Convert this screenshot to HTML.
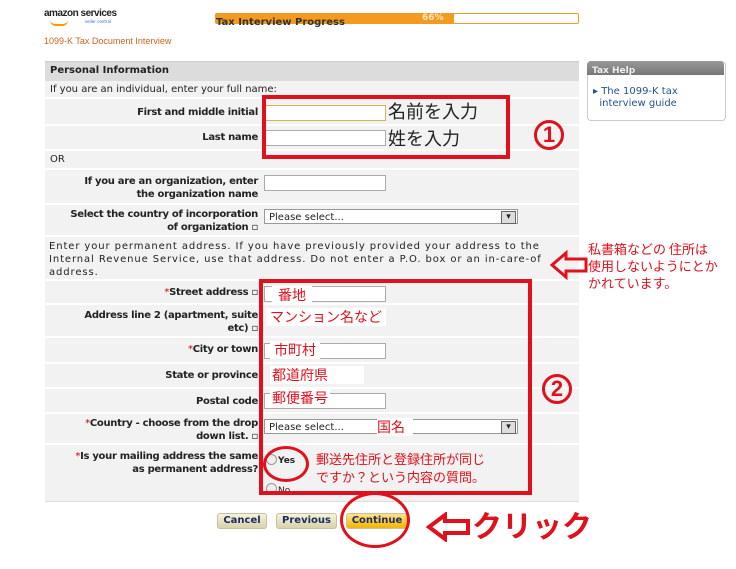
<!DOCTYPE html>
<html><head><meta charset="utf-8"><style>
body{margin:0;width:736px;height:569px;background:#fff;position:relative;overflow:hidden;font-family:"DejaVu Sans","Liberation Sans",sans-serif;font-size:10px;color:#222}
.a{position:absolute}
.row{position:absolute;left:45px;width:534px;background:#f2f2f2;border-bottom:2px solid #fff}
.lbl{position:absolute;right:321px;text-align:right;font-weight:bold;font-size:10px;line-height:13px;width:215px;white-space:nowrap;letter-spacing:-0.3px}
.inp{position:absolute;left:264px;width:120px;height:14px;border:1px solid #aaa;background:#fff}
.jp{font-family:"Noto Sans CJK JP",sans-serif;color:#e0101c}
.star{color:#c00;font-weight:normal}
.sel{position:absolute;left:264px;width:254px;height:15px;border:1px solid #999;background:#fff;font-size:10px;line-height:15px;padding-left:4px;box-sizing:border-box}
.sel:after{content:"▾";position:absolute;right:1px;top:1px;width:13px;height:11px;border:1px solid #666;background:#ddd;line-height:11px;text-align:center;font-size:9px}
.btn{position:absolute;top:513px;height:14px;border-radius:3px;background:linear-gradient(#f6f3d8,#d8d2a8);font-weight:bold;font-size:10px;color:#1a2b66;line-height:14px;text-align:center;border:1px solid #c8c0a0}
.circ{position:absolute;width:30px;height:30px;border:3px solid #e0101c;border-radius:50%;box-sizing:border-box;color:#e0101c;font-size:22px;font-weight:bold;text-align:center;line-height:24px;font-family:"Liberation Sans",sans-serif}
</style></head><body>
<div class="a" style="left:44px;top:8px;font-size:10px;font-weight:bold;letter-spacing:-0.5px;font-family:'Liberation Sans',sans-serif">amazon services</div>
<div class="a" style="left:85px;top:19px;font-size:4px;color:#36c">seller central</div>
<div class="a" style="left:50px;top:20px;width:18px;height:4px;border-bottom:2px solid #f90;border-radius:0 0 10px 10px"></div>
<div class="a" style="left:215px;top:13px;width:362px;height:9px;border:1px solid #e9a020;border-radius:2px;background:#fff"></div>
<div class="a" style="left:216px;top:13px;width:238px;height:10px;background:#f49a20"></div>
<div class="a" style="left:422px;top:13px;font-size:9px;font-weight:bold;color:#fbe6c0">66%</div>
<div class="a" style="left:216px;top:17px;font-size:10px;font-weight:bold;color:#333">Tax Interview Progress</div>
<div class="a" style="left:44px;top:36px;font-size:9px;color:#c9651b;font-family:'Liberation Sans',sans-serif">1099-K Tax Document Interview</div>

<div class="a" style="left:45px;top:61px;width:534px;height:19px;background:#dcdcdc;border-top:1px solid #ccc"></div>
<div class="a" style="left:50px;top:65px;font-weight:bold;font-size:10px">Personal Information</div>
<div class="row" style="top:81px;height:16px"><div class="a" style="left:5px;top:3px">If you are an individual, enter your full name:</div></div>
<div class="row" style="top:99px;height:25px"><div class="lbl" style="top:7px">First and middle initial</div></div>
<div class="inp" style="top:105px;border-color:#d4b45a"></div>
<div class="row" style="top:126px;height:23px"><div class="lbl" style="top:5px">Last name</div></div>
<div class="inp" style="top:130px"></div>
<div class="row" style="top:151px;height:17px"><div class="a" style="left:5px;top:3px">OR</div></div>
<div class="row" style="top:170px;height:33px"><div class="lbl" style="top:5px">If you are an organization, enter<br>the organization name</div></div>
<div class="inp" style="top:175px"></div>
<div class="row" style="top:205px;height:30px"><div class="lbl" style="top:3px">Select the country of incorporation<br>of organization ▫</div></div>
<div class="sel" style="top:209px">Please select...</div>
<div class="row" style="top:237px;height:42px"><div class="a" style="left:4px;top:3px;width:530px;line-height:13px;font-size:10px;letter-spacing:0.9px;white-space:nowrap">Enter your permanent address. If you have previously provided your address to the<br>Internal Revenue Service, use that address. Do not enter a P.O. box or an in-care-of<br>address.</div></div>
<div class="row" style="top:281px;height:22px"><div class="lbl" style="top:5px"><span class="star">*</span>Street address ▫</div></div>
<div class="inp" style="top:286px"></div>
<div class="row" style="top:305px;height:31px"><div class="lbl" style="top:4px">Address line 2 (apartment, suite<br>etc) ▫</div></div>
<div class="row" style="top:338px;height:24px"><div class="lbl" style="top:5px"><span class="star">*</span>City or town</div></div>
<div class="inp" style="top:343px"></div>
<div class="row" style="top:364px;height:23px"><div class="lbl" style="top:5px">State or province</div></div>
<div class="row" style="top:389px;height:23px"><div class="lbl" style="top:6px">Postal code</div></div>
<div class="inp" style="top:393px"></div>
<div class="row" style="top:414px;height:29px"><div class="lbl" style="top:3px"><span class="star">*</span>Country - choose from the drop<br>down list. ▫</div></div>
<div class="sel" style="top:419px">Please select...</div>
<div class="row" style="top:445px;height:56px;border-bottom:1px solid #ddd"><div class="lbl" style="top:5px"><span class="star">*</span>Is your mailing address the same<br>as permanent address?</div></div>
<div class="a" style="left:266px;top:454px;width:9px;height:9px;border:1px solid #999;border-radius:50%;background:#eee"></div>
<div class="a" style="left:278px;top:456px;font-weight:bold;font-size:9px">Yes</div>
<div class="a" style="left:266px;top:483px;width:9px;height:9px;border:1px solid #999;border-radius:50%;background:#eee"></div>
<div class="a" style="left:278px;top:486px;font-size:9px">No</div>

<div class="a" style="left:587px;top:61px;width:137px;height:58px;border:1px solid #ccc;border-radius:4px;background:#fff"></div>
<div class="a" style="left:587px;top:61px;width:137px;height:14px;background:linear-gradient(#999,#777);border-radius:4px 4px 0 0;color:#eee;font-weight:bold;font-size:9px;line-height:20px;padding-left:5px;box-sizing:border-box;overflow:hidden">Tax Help</div>
<div class="a" style="left:593px;top:86px;font-size:10px;color:#23538f;line-height:12px;width:120px">▸ The 1099-K tax<br>&nbsp;&nbsp;interview guide</div>

<div class="btn" style="left:217px;width:48px">Cancel</div>
<div class="btn" style="left:276px;width:59px">Previous</div>
<div class="btn" style="left:346px;width:60px;background:linear-gradient(#fde38a,#f2b400)">Continue</div>

<div class="a" style="left:262px;top:95px;width:248px;height:64px;border:4px solid #e0101c;box-sizing:border-box"></div>
<div class="a" style="left:388px;top:100px;font-size:18px;font-family:'Noto Sans CJK JP',sans-serif;line-height:22px">名前を入力</div>
<div class="a" style="left:388px;top:127px;font-size:18px;font-family:'Noto Sans CJK JP',sans-serif;line-height:22px">姓を入力</div>
<div class="circ" style="left:534px;top:120px">1</div>
<div class="a" style="left:259px;top:279px;width:273px;height:216px;border:4px solid #e0101c;box-sizing:border-box"></div>
<div class="circ" style="left:542px;top:374px">2</div>
<div class="a jp" style="left:272px;top:286px;font-size:14px;background:#fff;padding:0 6px;line-height:18px">番地</div>
<div class="a jp" style="left:266px;top:308px;font-size:14px;background:#fff;line-height:18px;padding:0 4px">マンション名など</div>
<div class="a jp" style="left:270px;top:341px;font-size:14px;background:#fff;line-height:18px;padding:0 4px">市町村</div>
<div class="a jp" style="left:270px;top:366px;font-size:14px;background:#fff;line-height:18px;padding:0 36px 0 2px">都道府県</div>
<div class="a jp" style="left:270px;top:389px;font-size:14px;background:#fff;line-height:18px;padding:0 2px">郵便番号</div>
<div class="a jp" style="left:377px;top:418px;font-size:14px;background:#fff;line-height:18px;padding:0 8px 0 0">国名</div>
<div class="a jp" style="left:316px;top:450px;font-size:13px;line-height:18px">郵送先住所と登録住所が同じ<br>ですか？という内容の質問。</div>
<div class="a" style="left:263px;top:446px;width:40px;height:30px;border:3px solid #e0101c;border-radius:50%"></div>
<div class="a jp" style="left:588px;top:240px;font-size:13px;line-height:17px">私書箱などの 住所は<br>使用しないようにとか<br>かれています。</div>
<svg class="a" style="left:550px;top:250px" width="40" height="30"><path d="M2 15 L16 3 L16 9 L36 9 L36 21 L16 21 L16 27 Z" fill="none" stroke="#e0101c" stroke-width="3"/></svg>
<div class="a" style="left:340px;top:492px;width:70px;height:56px;border:3px solid #e0101c;border-radius:50%;box-sizing:border-box"></div>
<svg class="a" style="left:426px;top:512px" width="45" height="30"><path d="M3 15 L19 3 L19 9 L42 9 L42 21 L19 21 L19 27 Z" fill="none" stroke="#e0101c" stroke-width="4"/></svg>
<div class="a jp" style="left:472px;top:504px;font-size:30px;font-weight:bold;line-height:40px">クリック</div>
</body></html>
